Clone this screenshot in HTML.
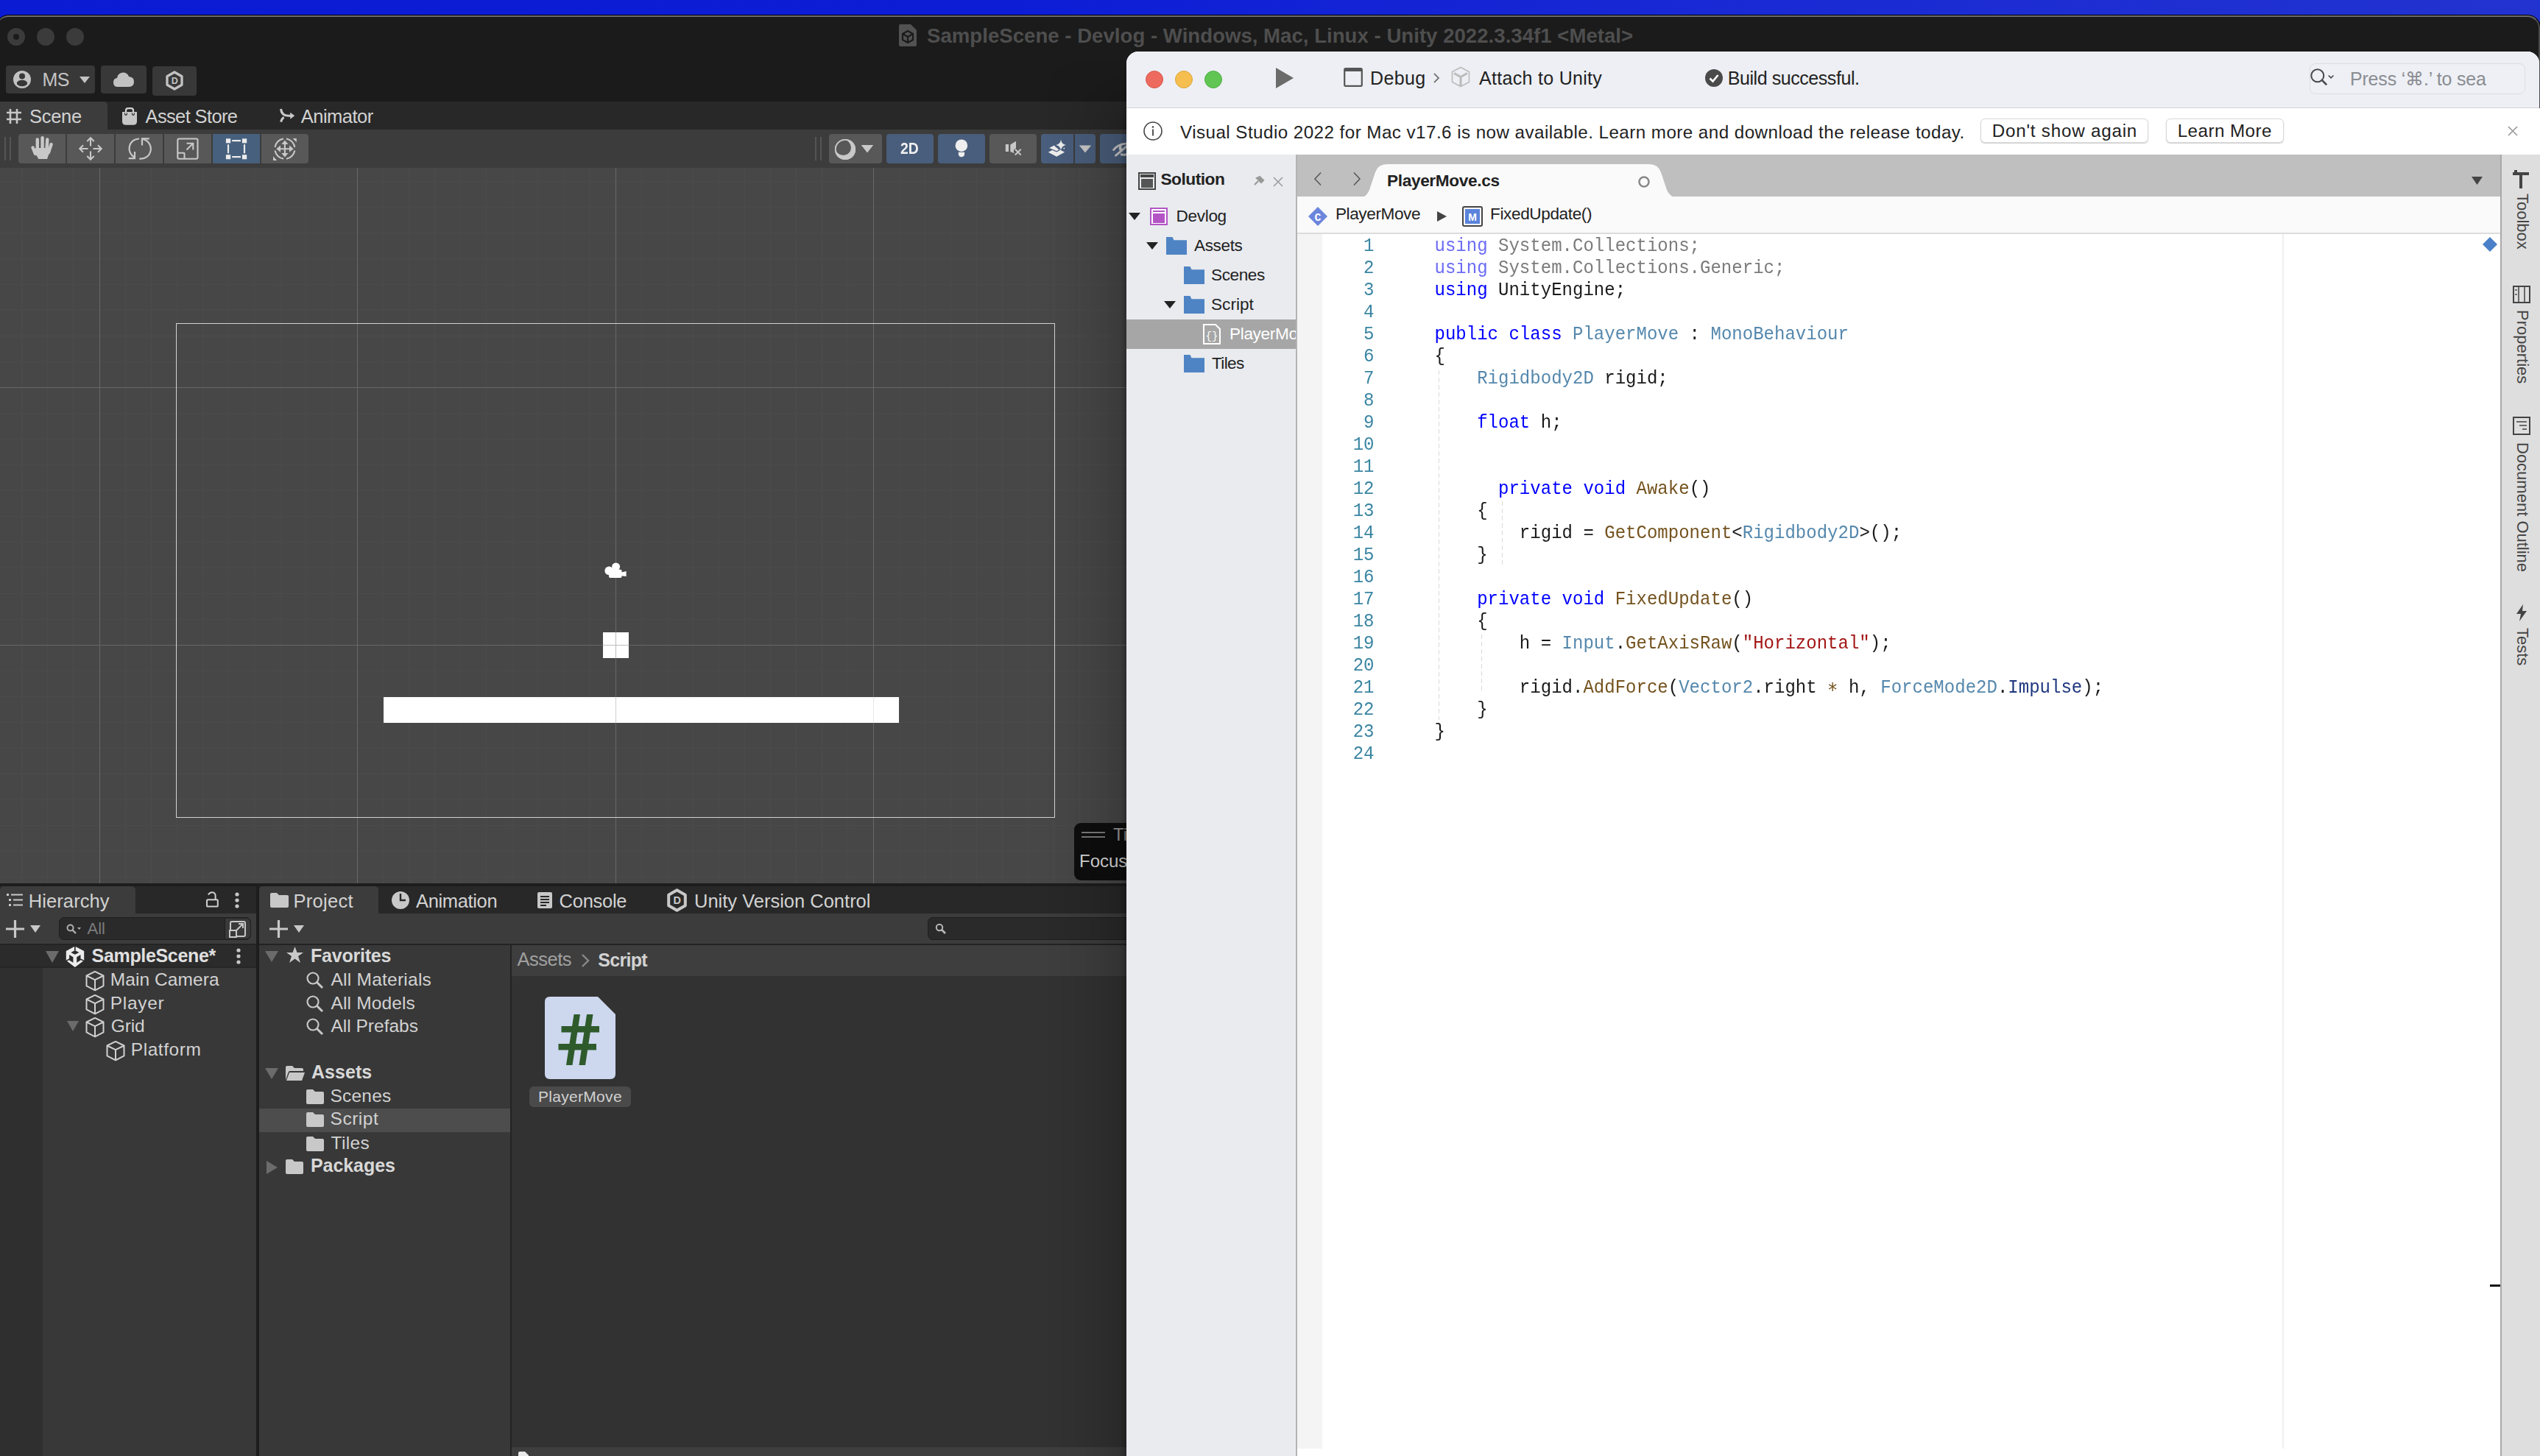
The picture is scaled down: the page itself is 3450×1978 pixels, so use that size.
<!DOCTYPE html><html><head><meta charset="utf-8"><style>html,body{margin:0;padding:0;width:3450px;height:1978px;overflow:hidden;background:#1b1b1b;}*{box-sizing:border-box;}</style></head><body><div style="position:absolute;left:0px;top:0px;width:3450px;height:30px;background:linear-gradient(90deg,#0b1bd4 0%,#0d1dd6 40%,#1a2ad4 70%,#2233d0 100%);"></div><div style="position:absolute;left:-5px;top:21px;width:3455px;height:1957px;background:#1b1b1b;border-radius:17px 17px 0 0;border-top:2px solid #6a6a6a;border-right:2px solid #4a4a4a;box-shadow:0 0 0 1px #000;"></div><div style="position:absolute;left:10px;top:38px;width:24px;height:24px;background:#3b3b3b;border-radius:50%;"></div><div style="position:absolute;left:50px;top:38px;width:24px;height:24px;background:#3b3b3b;border-radius:50%;"></div><div style="position:absolute;left:90px;top:38px;width:24px;height:24px;background:#3b3b3b;border-radius:50%;"></div><div style="position:absolute;left:18px;top:46px;width:8px;height:8px;background:#1b1b1b;border-radius:50%;"></div><svg style="position:absolute;left:1221px;top:33px;" width="24" height="30" viewBox="0 0 24 30"><path d="M2 0 H16 L24 8 V28 Q24 30 22 30 H2 Q0 30 0 28 V2 Q0 0 2 0Z" fill="#525252"/><path d="M12 9 L19 13 V21 L12 25 L5 21 V13Z" fill="none" stroke="#1b1b1b" stroke-width="2.2"/><path d="M12 17 V25 M12 17 L5 13 M12 17 L19 13" stroke="#1b1b1b" stroke-width="2.2"/></svg><div style="position:absolute;left:1259.00px;top:35.14px;font-family:'Liberation Sans', sans-serif;font-size:27.6px;line-height:27.6px;font-weight:700;color:#4e4e4e;white-space:pre;letter-spacing:0.014px;">SampleScene - Devlog - Windows, Mac, Linux - Unity 2022.3.34f1 &lt;Metal&gt;</div><div style="position:absolute;left:8px;top:89px;width:121px;height:38px;background:#383838;border-radius:4px;"></div><svg style="position:absolute;left:18px;top:96px;" width="24" height="24" viewBox="0 0 24 24"><circle cx="12" cy="12" r="12" fill="#c2c2c2"/><circle cx="12" cy="7.5" r="4" fill="#383838"/><ellipse cx="12" cy="17" rx="7.2" ry="4.3" fill="#383838"/></svg><div style="position:absolute;left:57.50px;top:95.84px;font-family:'Liberation Sans', sans-serif;font-size:25px;line-height:25px;font-weight:400;color:#c4c4c4;white-space:pre;letter-spacing:-0.625px;">MS</div><svg style="position:absolute;left:108px;top:104px;" width="14" height="9" viewBox="0 0 14 9"><path d="M0 0H14L7 9Z" fill="#c4c4c4"/></svg><div style="position:absolute;left:137px;top:89px;width:62px;height:38px;background:#383838;border-radius:4px;"></div><svg style="position:absolute;left:154px;top:97px;" width="28" height="21" viewBox="0 0 28 21"><path d="M6 21 Q0 21 0 15 Q0 9.5 5 9 Q6 2 13 1.5 Q19 1.5 21 7 Q28 7.5 28 14 Q28 21 21 21Z" fill="#c2c2c2"/></svg><div style="position:absolute;left:207px;top:90px;width:60px;height:40px;background:#383838;border-radius:4px;"></div><svg style="position:absolute;left:225px;top:96px;" width="24" height="27" viewBox="0 0 24 27"><path d="M12 2 L22 7.7 V19.3 L12 25 L2 19.3 V7.7Z" fill="none" stroke="#c2c2c2" stroke-width="3.3" stroke-linejoin="round"/><text x="12.3" y="17.8" text-anchor="middle" font-family="Liberation Sans" font-weight="700" font-size="12.5" fill="#c2c2c2">D</text></svg><div style="position:absolute;left:0px;top:138px;width:1530px;height:38px;background:#282828;"></div><div style="position:absolute;left:0px;top:138px;width:146px;height:38px;background:#3c3c3c;border-radius:0 5px 0 0;"></div><svg style="position:absolute;left:8px;top:147px;" width="22" height="22" viewBox="0 0 22 22"><path d="M6 1V21M15 1V21M1 6H21M1 15H21" stroke="#c8c8c8" stroke-width="2.6"/></svg><div style="position:absolute;left:40.00px;top:146.41px;font-family:'Liberation Sans', sans-serif;font-size:25.5px;line-height:25.5px;font-weight:400;color:#d2d2d2;white-space:pre;letter-spacing:-0.281px;">Scene</div><svg style="position:absolute;left:160px;top:140px;" width="40" height="35" viewBox="160 140 40 35"><path d="M171 152 V150 Q171 147.1 174 147.1 H178 Q181 147.1 181 150 V152" fill="none" stroke="#d2d2d2" stroke-width="2.2"/><path d="M166 152 H186 V165 Q186 169.8 181.2 169.8 H170.8 Q166 169.8 166 165Z" fill="#c6c6c6"/><path d="M169.4 153.5 Q169.4 156.4 171 156.4 Q172.5 156.4 172.5 153.5 M179.4 153.5 Q179.4 156.4 181 156.4 Q182.5 156.4 182.5 153.5" fill="none" stroke="#2a2a2a" stroke-width="1.1"/></svg><div style="position:absolute;left:197.50px;top:146.41px;font-family:'Liberation Sans', sans-serif;font-size:25.5px;line-height:25.5px;font-weight:400;color:#d2d2d2;white-space:pre;letter-spacing:-0.633px;">Asset Store</div><svg style="position:absolute;left:370px;top:140px;" width="40" height="35" viewBox="370 140 40 35"><path d="M381.5 148 Q382.5 157.3 391.5 157.3 H395" fill="none" stroke="#c8c8c8" stroke-width="3.1"/><path d="M394.2 152.8 L400.2 157.3 L394.2 161.8Z" fill="#c8c8c8"/><path d="M381.8 165.6 Q382.4 161.5 385.6 159.3" fill="none" stroke="#c8c8c8" stroke-width="3.1"/></svg><div style="position:absolute;left:408.80px;top:146.41px;font-family:'Liberation Sans', sans-serif;font-size:25.5px;line-height:25.5px;font-weight:400;color:#d2d2d2;white-space:pre;letter-spacing:-0.521px;">Animator</div><div style="position:absolute;left:0px;top:176px;width:1530px;height:52px;background:#3c3c3c;"></div><div style="position:absolute;left:6px;top:186px;width:2px;height:32px;background:#555;"></div><div style="position:absolute;left:13px;top:186px;width:2px;height:32px;background:#555;"></div><div style="position:absolute;left:25px;top:182px;width:64px;height:40px;background:#585858;border-radius:4px 0 0 4px;"></div><div style="position:absolute;left:91px;top:182px;width:64px;height:40px;background:#585858;border-radius:0;"></div><div style="position:absolute;left:157px;top:182px;width:64px;height:40px;background:#585858;border-radius:0;"></div><div style="position:absolute;left:223px;top:182px;width:64px;height:40px;background:#585858;border-radius:0;"></div><div style="position:absolute;left:289px;top:182px;width:64px;height:40px;background:#46607d;border-radius:0;"></div><div style="position:absolute;left:355px;top:182px;width:64px;height:40px;background:#585858;border-radius:0 4px 4px 0;"></div><svg style="position:absolute;left:35px;top:182px;" width="45" height="40" viewBox="35 182 45 40"><g stroke="#c8c8c8" stroke-width="4.4" stroke-linecap="round"><path d="M50.8 205 L50.8 189.5"/><path d="M57.6 204 L57.6 187.2"/><path d="M63.4 205 L64.3 189.5"/><path d="M66 207 L69.6 196"/><path d="M48 209 L44.5 200.5"/></g><path d="M45.5 204 Q48 200 52 201 L66 201 Q68.5 202 68 205 L64 216 H52.3 Z" fill="#c8c8c8"/></svg><svg style="position:absolute;left:100px;top:182px;" width="46" height="40" viewBox="100 182 46 40"><g stroke="#c8c8c8" stroke-width="2.1" fill="none"><path d="M123 187.5 V198.5 M123 205.5 V216.5 M108.5 202 H119.5 M126.5 202 H137.5"/><path d="M118.3 192 L123 187.3 L127.7 192 M118.3 212 L123 216.7 L127.7 212 M113 197.3 L108.3 202 L113 206.7 M133 197.3 L137.7 202 L133 206.7"/></g></svg><svg style="position:absolute;left:165px;top:182px;" width="46" height="40" viewBox="165 182 46 40"><g stroke="#c8c8c8" stroke-width="2.2" fill="none"><path d="M189 188.5 A13.3 13.3 0 0 0 182.5 213.5"/><path d="M189.3 215.5 A13.3 13.3 0 0 0 193.5 189"/><path d="M183 206 V215.2 H174.8"/><path d="M193 197.5 V188.3 H202.8"/></g></svg><svg style="position:absolute;left:236px;top:182px;" width="40" height="40" viewBox="236 182 40 40"><g stroke="#c8c8c8" stroke-width="2.1" fill="none"><rect x="241.3" y="188.5" width="27.2" height="27.2" rx="2"/><path d="M241.3 207.8 H249.5 Q250.5 207.8 250.5 208.8 V215.7"/><path d="M253.5 203.5 L262 195 M253.5 194.7 H262.3 V203.5"/></g></svg><svg style="position:absolute;left:300px;top:182px;" width="40" height="40" viewBox="300 182 40 40"><g fill="#ececec"><rect x="306.9" y="188.3" width="6.3" height="6.1"/><rect x="328.9" y="188.3" width="6.3" height="6.1"/><rect x="306.9" y="210.2" width="6.3" height="6.1"/><rect x="328.9" y="210.2" width="6.3" height="6.1"/></g><g stroke="#ececec" stroke-width="2.2"><path d="M315.2 191.2 H327 M315.2 213.2 H327 M310 196.3 V208.2 M332 196.3 V208.2"/></g></svg><svg style="position:absolute;left:366px;top:182px;" width="44" height="40" viewBox="366 182 44 40"><g stroke="#c8c8c8" stroke-width="2.1" fill="none"><path d="M373.5 200 A13.5 13.5 0 0 1 385 188.5 M389 188.5 A13.5 13.5 0 0 1 400.3 200 M400.3 204.5 A13.5 13.5 0 0 1 389 215.6 M385 215.6 A13.5 13.5 0 0 1 373.5 204.5"/><path d="M386.9 192 V212 M377 202.2 H397"/></g><g fill="#c8c8c8"><path d="M386.9 190.5 L391.5 196 H382.3Z M386.9 213.6 L391.5 208 H382.3Z M375.3 202.2 L381 197.6 V206.8Z M398.6 202.2 L393 197.6 V206.8Z"/><path d="M397.5 188 H402.8 V193.3Z M371 218 V212.6 L376.3 218Z"/></g></svg><div style="position:absolute;left:1107px;top:186px;width:2px;height:32px;background:#555;"></div><div style="position:absolute;left:1114px;top:186px;width:2px;height:32px;background:#555;"></div><div style="position:absolute;left:1126px;top:182px;width:72px;height:40px;background:#585858;border-radius:4px;"></div><svg style="position:absolute;left:1126px;top:182px;" width="72" height="40" viewBox="1126 182 72 40"><circle cx="1148" cy="203" r="14.1" fill="#c8c8c8"/><circle cx="1145.4" cy="200.4" r="10.6" fill="#585858"/><circle cx="1148" cy="203" r="13.2" fill="none" stroke="#c8c8c8" stroke-width="1.8"/></svg><svg style="position:absolute;left:1126px;top:182px;" width="72" height="40" viewBox="1126 182 72 40"><path d="M1169.7 197.1 H1186.2 L1178 207.6Z" fill="#c8c8c8"/></svg><div style="position:absolute;left:1204px;top:182px;width:64px;height:40px;background:#495e7c;border-radius:4px;"></div><div style="position:absolute;left:1223.00px;top:191.15px;font-family:'Liberation Sans', sans-serif;font-size:22.5px;line-height:22.5px;font-weight:700;color:#f0f0f0;white-space:pre;transform:scaleX(0.86);transform-origin:0 0;">2D</div><div style="position:absolute;left:1274px;top:182px;width:64px;height:40px;background:#495e7c;border-radius:4px;"></div><svg style="position:absolute;left:1274px;top:182px;" width="64" height="40" viewBox="1274 182 64 40"><circle cx="1305.9" cy="197.7" r="8.3" fill="#eee"/><path d="M1301.8 206.8 H1310.1 V208.8 Q1310.1 213.2 1305.95 213.2 Q1301.8 213.2 1301.8 208.8Z" fill="#eee"/></svg><div style="position:absolute;left:1344px;top:182px;width:64px;height:40px;background:#585858;border-radius:4px;"></div><svg style="position:absolute;left:1344px;top:182px;" width="64" height="40" viewBox="1344 182 64 40"><rect x="1365.8" y="196" width="4.2" height="10" fill="#c8c8c8"/><path d="M1372.3 196.6 L1380 191.8 V201.5 Q1376.6 202 1376.8 206.5 L1378 208.3 L1372.3 206Z" fill="#c8c8c8"/><path d="M1378.8 202.8 L1386.6 210.5 M1386.6 202.8 L1378.8 210.5" stroke="#c8c8c8" stroke-width="2"/></svg><div style="position:absolute;left:1414px;top:182px;width:74px;height:40px;background:#495e7c;border-radius:4px;"></div><div style="position:absolute;left:1458px;top:182px;width:2px;height:40px;background:#3c3c3c;"></div><svg style="position:absolute;left:1414px;top:182px;" width="74" height="40" viewBox="1414 182 74 40"><path d="M1423.8 206.8 L1435.1 201 L1446.1 206.8 L1435.1 212.8Z" fill="#eee"/><path d="M1423.8 201 L1432.3 196.8 Q1433.5 199.5 1435.5 200.3 Q1438.2 201.6 1438.6 204.2 L1435.1 205.8Z" fill="#eee" stroke="#495e7c" stroke-width="1.2"/><path d="M1441 189.7 Q1442 196 1448.1 196.9 Q1442 198 1441 203.8 Q1440 198 1434 196.9 Q1440 196 1441 189.7Z" fill="#eee"/><circle cx="1445.3" cy="201.5" r="0.9" fill="#eee"/></svg><svg style="position:absolute;left:1414px;top:182px;" width="74" height="40" viewBox="1414 182 74 40"><path d="M1465.8 197.4 H1482.2 L1474 207.6Z" fill="#c8c8c8"/></svg><div style="position:absolute;left:1494px;top:182px;width:60px;height:40px;background:#495e7c;border-radius:4px;"></div><svg style="position:absolute;left:1494px;top:182px;" width="40" height="40" viewBox="1494 182 40 40"><path d="M1512.6 203.6 Q1518.5 195.6 1531 194.8" fill="none" stroke="#c8c8c8" stroke-width="2.8" stroke-linecap="round"/><path d="M1515.6 211.2 L1531 198.2" stroke="#c8c8c8" stroke-width="3" stroke-linecap="round"/><path d="M1522 209.8 Q1527 210.8 1531 209.8" fill="none" stroke="#c8c8c8" stroke-width="3"/><path d="M1520.5 198.5 Q1518.6 202.5 1521.5 205.5 L1525 202.5 Q1522.5 201 1523.5 197.5Z" fill="#c8c8c8"/></svg><div style="position:absolute;left:0px;top:228px;width:1530px;height:972px;background:#474747;"></div><svg style="position:absolute;left:0px;top:228px;" width="1530" height="972" viewBox="0 0 1530 972"><rect x="29" y="0" width="1" height="972" fill="#4b4b4b"/><rect x="64" y="0" width="1" height="972" fill="#4b4b4b"/><rect x="99" y="0" width="1" height="972" fill="#4b4b4b"/><rect x="135" y="0" width="1" height="972" fill="#4b4b4b"/><rect x="170" y="0" width="1" height="972" fill="#4b4b4b"/><rect x="205" y="0" width="1" height="972" fill="#4b4b4b"/><rect x="240" y="0" width="1" height="972" fill="#4b4b4b"/><rect x="275" y="0" width="1" height="972" fill="#4b4b4b"/><rect x="310" y="0" width="1" height="972" fill="#4b4b4b"/><rect x="345" y="0" width="1" height="972" fill="#4b4b4b"/><rect x="380" y="0" width="1" height="972" fill="#4b4b4b"/><rect x="415" y="0" width="1" height="972" fill="#4b4b4b"/><rect x="450" y="0" width="1" height="972" fill="#4b4b4b"/><rect x="485" y="0" width="1" height="972" fill="#4b4b4b"/><rect x="520" y="0" width="1" height="972" fill="#4b4b4b"/><rect x="555" y="0" width="1" height="972" fill="#4b4b4b"/><rect x="590" y="0" width="1" height="972" fill="#4b4b4b"/><rect x="625" y="0" width="1" height="972" fill="#4b4b4b"/><rect x="660" y="0" width="1" height="972" fill="#4b4b4b"/><rect x="695" y="0" width="1" height="972" fill="#4b4b4b"/><rect x="730" y="0" width="1" height="972" fill="#4b4b4b"/><rect x="765" y="0" width="1" height="972" fill="#4b4b4b"/><rect x="800" y="0" width="1" height="972" fill="#4b4b4b"/><rect x="836" y="0" width="1" height="972" fill="#4b4b4b"/><rect x="871" y="0" width="1" height="972" fill="#4b4b4b"/><rect x="906" y="0" width="1" height="972" fill="#4b4b4b"/><rect x="941" y="0" width="1" height="972" fill="#4b4b4b"/><rect x="976" y="0" width="1" height="972" fill="#4b4b4b"/><rect x="1011" y="0" width="1" height="972" fill="#4b4b4b"/><rect x="1046" y="0" width="1" height="972" fill="#4b4b4b"/><rect x="1081" y="0" width="1" height="972" fill="#4b4b4b"/><rect x="1116" y="0" width="1" height="972" fill="#4b4b4b"/><rect x="1151" y="0" width="1" height="972" fill="#4b4b4b"/><rect x="1186" y="0" width="1" height="972" fill="#4b4b4b"/><rect x="1221" y="0" width="1" height="972" fill="#4b4b4b"/><rect x="1256" y="0" width="1" height="972" fill="#4b4b4b"/><rect x="1291" y="0" width="1" height="972" fill="#4b4b4b"/><rect x="1326" y="0" width="1" height="972" fill="#4b4b4b"/><rect x="1361" y="0" width="1" height="972" fill="#4b4b4b"/><rect x="1396" y="0" width="1" height="972" fill="#4b4b4b"/><rect x="1431" y="0" width="1" height="972" fill="#4b4b4b"/><rect x="1466" y="0" width="1" height="972" fill="#4b4b4b"/><rect x="1501" y="0" width="1" height="972" fill="#4b4b4b"/><rect x="0" y="18" width="1530" height="1" fill="#4b4b4b"/><rect x="0" y="53" width="1530" height="1" fill="#4b4b4b"/><rect x="0" y="88" width="1530" height="1" fill="#4b4b4b"/><rect x="0" y="123" width="1530" height="1" fill="#4b4b4b"/><rect x="0" y="158" width="1530" height="1" fill="#4b4b4b"/><rect x="0" y="193" width="1530" height="1" fill="#4b4b4b"/><rect x="0" y="228" width="1530" height="1" fill="#4b4b4b"/><rect x="0" y="263" width="1530" height="1" fill="#4b4b4b"/><rect x="0" y="298" width="1530" height="1" fill="#4b4b4b"/><rect x="0" y="333" width="1530" height="1" fill="#4b4b4b"/><rect x="0" y="368" width="1530" height="1" fill="#4b4b4b"/><rect x="0" y="403" width="1530" height="1" fill="#4b4b4b"/><rect x="0" y="438" width="1530" height="1" fill="#4b4b4b"/><rect x="0" y="473" width="1530" height="1" fill="#4b4b4b"/><rect x="0" y="508" width="1530" height="1" fill="#4b4b4b"/><rect x="0" y="543" width="1530" height="1" fill="#4b4b4b"/><rect x="0" y="578" width="1530" height="1" fill="#4b4b4b"/><rect x="0" y="613" width="1530" height="1" fill="#4b4b4b"/><rect x="0" y="648" width="1530" height="1" fill="#4b4b4b"/><rect x="0" y="683" width="1530" height="1" fill="#4b4b4b"/><rect x="0" y="718" width="1530" height="1" fill="#4b4b4b"/><rect x="0" y="753" width="1530" height="1" fill="#4b4b4b"/><rect x="0" y="788" width="1530" height="1" fill="#4b4b4b"/><rect x="0" y="823" width="1530" height="1" fill="#4b4b4b"/><rect x="0" y="858" width="1530" height="1" fill="#4b4b4b"/><rect x="0" y="893" width="1530" height="1" fill="#4b4b4b"/><rect x="0" y="928" width="1530" height="1" fill="#4b4b4b"/><rect x="0" y="963" width="1530" height="1" fill="#4b4b4b"/><rect x="135" y="0" width="1" height="972" fill="#686868"/><rect x="485" y="0" width="1" height="972" fill="#686868"/><rect x="836" y="0" width="1" height="972" fill="#686868"/><rect x="1186" y="0" width="1" height="972" fill="#686868"/><rect x="0" y="298" width="1530" height="1" fill="#686868"/><rect x="0" y="648" width="1530" height="1" fill="#686868"/></svg><div style="position:absolute;left:239px;top:439px;width:1194px;height:672px;border:1.5px solid #d2d2d2;"></div><div style="position:absolute;left:521px;top:947px;width:700px;height:35px;background:#ffffff;"></div><div style="position:absolute;left:819px;top:859px;width:35px;height:35px;background:#ffffff;"></div><div style="position:absolute;left:836px;top:859px;width:1px;height:35px;background:#bdbdbd;"></div><div style="position:absolute;left:819px;top:876px;width:35px;height:1px;background:#bdbdbd;"></div><div style="position:absolute;left:836px;top:947px;width:1px;height:35px;background:#cfcfcf;"></div><div style="position:absolute;left:1186px;top:947px;width:1px;height:35px;background:#e6e6e6;"></div><svg style="position:absolute;left:815px;top:755px;" width="45" height="35" viewBox="0 0 45 35"><circle cx="12.3" cy="20.4" r="5.9" fill="#fff"/><circle cx="21.6" cy="14.9" r="5.5" fill="#fff"/><rect x="12" y="18.75" width="17.6" height="11.25" rx="2" fill="#fff"/><path d="M29 22.5 L35.6 20.9 L35.6 27.9 L29 27.3 Z" fill="#fff"/></svg><div style="position:absolute;left:1459px;top:1118px;width:100px;height:78px;background:#0e0e0e;border-radius:9px;"></div><div style="position:absolute;left:1469px;top:1130px;width:32px;height:2px;background:#7a7a7a;"></div><div style="position:absolute;left:1469px;top:1136px;width:32px;height:2px;background:#7a7a7a;"></div><div style="position:absolute;left:1512.00px;top:1121.68px;font-family:'Liberation Sans', sans-serif;font-size:24px;line-height:24px;font-weight:400;color:#9a9a9a;white-space:pre;">Tilemap</div><div style="position:absolute;left:1466.00px;top:1158.18px;font-family:'Liberation Sans', sans-serif;font-size:24px;line-height:24px;font-weight:400;color:#d8d8d8;white-space:pre;">Focus</div><div style="position:absolute;left:0px;top:1200px;width:1530px;height:778px;background:#1d1d1d;"></div><div style="position:absolute;left:0px;top:1204px;width:348px;height:37px;background:#282828;"></div><div style="position:absolute;left:352px;top:1204px;width:1178px;height:37px;background:#282828;"></div><div style="position:absolute;left:0px;top:1204px;width:184px;height:37px;background:#3c3c3c;border-radius:5px 5px 0 0;"></div><div style="position:absolute;left:352px;top:1204px;width:162px;height:37px;background:#3c3c3c;border-radius:5px 5px 0 0;"></div><svg style="position:absolute;left:9px;top:1214px;" width="22" height="17" viewBox="0 0 22 17"><rect x="0" y="0" width="3" height="3" fill="#c8c8c8"/><rect x="3" y="7" width="3" height="3" fill="#c8c8c8"/><rect x="3" y="14" width="3" height="3" fill="#c8c8c8"/><path d="M6 1.5H22M9 8.5H22M9 15.5H22" stroke="#c8c8c8" stroke-width="2.2"/></svg><div style="position:absolute;left:38.80px;top:1212.11px;font-family:'Liberation Sans', sans-serif;font-size:25.5px;line-height:25.5px;font-weight:400;color:#d2d2d2;white-space:pre;letter-spacing:0.080px;">Hierarchy</div><svg style="position:absolute;left:270px;top:1205px;" width="40" height="35" viewBox="270 1205 40 35"><path d="M282.8 1215.6 Q285 1212 288.3 1212.2 Q292.6 1212.5 292.6 1217 V1222.5" fill="none" stroke="#d0d0d0" stroke-width="2"/><rect x="281" y="1222.3" width="14.8" height="9.3" rx="1.2" fill="none" stroke="#d0d0d0" stroke-width="2"/></svg><svg style="position:absolute;left:318px;top:1212px;" width="8" height="22" viewBox="0 0 8 22"><circle cx="4" cy="3" r="2.6" fill="#c8c8c8"/><circle cx="4" cy="11" r="2.6" fill="#c8c8c8"/><circle cx="4" cy="19" r="2.6" fill="#c8c8c8"/></svg><svg style="position:absolute;left:367px;top:1213px;" width="25" height="20" viewBox="0 0 25 20"><path d="M0 2Q0 0 2 0H9L12 3H23Q25 3 25 5V18Q25 20 23 20H2Q0 20 0 18Z" fill="#c8c8c8"/></svg><div style="position:absolute;left:398.40px;top:1212.11px;font-family:'Liberation Sans', sans-serif;font-size:25.5px;line-height:25.5px;font-weight:400;color:#d2d2d2;white-space:pre;letter-spacing:0.303px;">Project</div><svg style="position:absolute;left:532px;top:1211px;" width="24" height="24" viewBox="0 0 24 24"><circle cx="12" cy="12" r="12" fill="#c8c8c8"/><path d="M12 3V12H19" fill="none" stroke="#282828" stroke-width="2.4"/></svg><div style="position:absolute;left:565.00px;top:1212.11px;font-family:'Liberation Sans', sans-serif;font-size:25.5px;line-height:25.5px;font-weight:400;color:#d2d2d2;white-space:pre;letter-spacing:-0.351px;">Animation</div><svg style="position:absolute;left:730px;top:1212px;" width="20" height="22" viewBox="0 0 20 22"><rect x="0" y="0" width="20" height="22" rx="2" fill="#c8c8c8"/><path d="M4 6H16M4 10H16M4 14H16M4 18H12" stroke="#282828" stroke-width="1.8"/></svg><div style="position:absolute;left:759.60px;top:1212.41px;font-family:'Liberation Sans', sans-serif;font-size:25.5px;line-height:25.5px;font-weight:400;color:#d2d2d2;white-space:pre;letter-spacing:-0.279px;">Console</div><svg style="position:absolute;left:905px;top:1207px;" width="29" height="32" viewBox="0 0 29 32"><path d="M14.5 2.3 L25.8 8.7 V23.3 L14.5 29.7 L3.2 23.3 V8.7Z" fill="none" stroke="#c8c8c8" stroke-width="4" stroke-linejoin="round"/><text x="14.8" y="21.3" text-anchor="middle" font-family="Liberation Sans" font-weight="700" font-size="14.5" fill="#c8c8c8">D</text></svg><div style="position:absolute;left:943.00px;top:1212.41px;font-family:'Liberation Sans', sans-serif;font-size:25.5px;line-height:25.5px;font-weight:400;color:#d2d2d2;white-space:pre;letter-spacing:-0.003px;">Unity Version Control</div><div style="position:absolute;left:0px;top:1241px;width:348px;height:41px;background:#3c3c3c;"></div><div style="position:absolute;left:0px;top:1282px;width:348px;height:2px;background:#232323;"></div><svg style="position:absolute;left:8px;top:1250px;" width="25" height="24" viewBox="0 0 25 24"><path d="M12.5 0V24M0 12H25" stroke="#c8c8c8" stroke-width="3.2"/></svg><svg style="position:absolute;left:41px;top:1257px;" width="14" height="10" viewBox="0 0 14 10"><path d="M0 0H14L7 10Z" fill="#c8c8c8"/></svg><div style="position:absolute;left:80px;top:1246px;width:261px;height:31px;background:#2a2a2a;border:1.5px solid #1f1f1f;border-radius:7px;"></div><div style="position:absolute;left:305px;top:1248px;width:35px;height:27px;background:#3a3a3a;border-radius:0 6px 6px 0;border-left:1.5px solid #1f1f1f;"></div><svg style="position:absolute;left:90px;top:1255px;" width="20" height="14" viewBox="0 0 20 14"><circle cx="5.5" cy="5.5" r="4" fill="none" stroke="#b0b0b0" stroke-width="2"/><path d="M8.5 8.5 L13 13" stroke="#b0b0b0" stroke-width="2.4"/><path d="M15 5H20L17.5 8Z" fill="#b0b0b0"/></svg><div style="position:absolute;left:118.50px;top:1251.38px;font-family:'Liberation Sans', sans-serif;font-size:22px;line-height:22px;font-weight:400;color:#7c7c7c;white-space:pre;">All</div><svg style="position:absolute;left:311px;top:1250px;" width="25" height="24" viewBox="0 0 25 24"><rect x="2" y="2" width="20" height="20" rx="2" fill="none" stroke="#c8c8c8" stroke-width="2"/><rect x="1" y="14" width="9" height="9" fill="#3a3a3a" stroke="#c8c8c8" stroke-width="2"/><path d="M10 14L19 5M13 5H19V11" fill="none" stroke="#c8c8c8" stroke-width="2"/></svg><div style="position:absolute;left:0px;top:1284px;width:348px;height:694px;background:#383838;"></div><div style="position:absolute;left:0px;top:1314px;width:58px;height:664px;background:#2f2f2f;"></div><div style="position:absolute;left:0px;top:1284px;width:348px;height:30px;background:#2b2b2b;"></div><div style="position:absolute;left:0px;top:1313px;width:348px;height:2px;background:#262626;"></div><svg style="position:absolute;left:62px;top:1292px;" width="18" height="16" viewBox="0 0 18 16"><path d="M0 0H18L9 16Z" fill="#6b6b6b"/></svg><svg style="position:absolute;left:85px;top:1282px;" width="35" height="35" viewBox="85 1282 35 35"><path d="M101.8 1285.6 L114.2 1292.1 V1304.8 L101.8 1314 L89.8 1304.8 V1292.1Z" fill="#ececec"/><g fill="#2b2b2b"><path d="M96.3 1293.9 L101.8 1291.1 L107.4 1293.9 L101.8 1296.7Z"/><rect x="101" y="1284" width="1.7" height="7.3"/><path d="M94.1 1297.1 L99.4 1300.3 V1307.7 L94.1 1304.6Z M109.5 1297.1 L104.2 1300.3 V1307.7 L109.5 1304.6Z"/></g><path d="M89.5 1305.6 L94.3 1303 M114.5 1305.6 L109.3 1303" stroke="#2b2b2b" stroke-width="1.6"/></svg><div style="position:absolute;left:124.60px;top:1285.84px;font-family:'Liberation Sans', sans-serif;font-size:25px;line-height:25px;font-weight:700;color:#e0e0e0;white-space:pre;letter-spacing:-0.335px;">SampleScene*</div><svg style="position:absolute;left:320px;top:1288px;" width="8" height="22" viewBox="0 0 8 22"><circle cx="4" cy="3" r="2.6" fill="#c8c8c8"/><circle cx="4" cy="11" r="2.6" fill="#c8c8c8"/><circle cx="4" cy="19" r="2.6" fill="#c8c8c8"/></svg><svg style="position:absolute;left:116px;top:1318.8px;" width="26" height="28" viewBox="0 0 26 28"><path d="M13 0.9 L24.5 6.5 V20.3 L13 26.3 L1.5 20.3 V6.5Z M1.5 6.5 L13 12.1 L24.5 6.5 M13 12.1 V26.3" fill="none" stroke="#d0d0d0" stroke-width="2" stroke-linejoin="round"/></svg><div style="position:absolute;left:149.80px;top:1318.96px;font-family:'Liberation Sans', sans-serif;font-size:24.5px;line-height:24.5px;font-weight:400;color:#d2d2d2;white-space:pre;letter-spacing:0.078px;">Main Camera</div><svg style="position:absolute;left:116px;top:1350.5px;" width="26" height="28" viewBox="0 0 26 28"><path d="M13 0.9 L24.5 6.5 V20.3 L13 26.3 L1.5 20.3 V6.5Z M1.5 6.5 L13 12.1 L24.5 6.5 M13 12.1 V26.3" fill="none" stroke="#d0d0d0" stroke-width="2" stroke-linejoin="round"/></svg><div style="position:absolute;left:149.80px;top:1350.66px;font-family:'Liberation Sans', sans-serif;font-size:24.5px;line-height:24.5px;font-weight:400;color:#d2d2d2;white-space:pre;letter-spacing:0.703px;">Player</div><svg style="position:absolute;left:116px;top:1382px;" width="26" height="28" viewBox="0 0 26 28"><path d="M13 0.9 L24.5 6.5 V20.3 L13 26.3 L1.5 20.3 V6.5Z M1.5 6.5 L13 12.1 L24.5 6.5 M13 12.1 V26.3" fill="none" stroke="#d0d0d0" stroke-width="2" stroke-linejoin="round"/></svg><div style="position:absolute;left:150.80px;top:1382.16px;font-family:'Liberation Sans', sans-serif;font-size:24.5px;line-height:24.5px;font-weight:400;color:#d2d2d2;white-space:pre;letter-spacing:-0.153px;">Grid</div><svg style="position:absolute;left:91px;top:1387px;" width="16" height="14" viewBox="0 0 16 14"><path d="M0 0H16L8 14Z" fill="#6b6b6b"/></svg><svg style="position:absolute;left:144px;top:1413.9px;" width="26" height="28" viewBox="0 0 26 28"><path d="M13 0.9 L24.5 6.5 V20.3 L13 26.3 L1.5 20.3 V6.5Z M1.5 6.5 L13 12.1 L24.5 6.5 M13 12.1 V26.3" fill="none" stroke="#d0d0d0" stroke-width="2" stroke-linejoin="round"/></svg><div style="position:absolute;left:177.80px;top:1414.06px;font-family:'Liberation Sans', sans-serif;font-size:24.5px;line-height:24.5px;font-weight:400;color:#d2d2d2;white-space:pre;letter-spacing:0.542px;">Platform</div><div style="position:absolute;left:352px;top:1241px;width:1178px;height:41px;background:#3c3c3c;"></div><div style="position:absolute;left:352px;top:1282px;width:1178px;height:2px;background:#232323;"></div><svg style="position:absolute;left:366px;top:1250px;" width="25" height="24" viewBox="0 0 25 24"><path d="M12.5 0V24M0 12H25" stroke="#c8c8c8" stroke-width="3.2"/></svg><svg style="position:absolute;left:399px;top:1257px;" width="14" height="10" viewBox="0 0 14 10"><path d="M0 0H14L7 10Z" fill="#c8c8c8"/></svg><div style="position:absolute;left:1260px;top:1246px;width:300px;height:31px;background:#2a2a2a;border:1.5px solid #1f1f1f;border-radius:7px;"></div><svg style="position:absolute;left:1270px;top:1254px;" width="16" height="16" viewBox="0 0 16 16"><circle cx="6" cy="6" r="4.2" fill="none" stroke="#b8b8b8" stroke-width="2"/><path d="M9 9 L14 14" stroke="#b8b8b8" stroke-width="2.6"/></svg><div style="position:absolute;left:352px;top:1284px;width:341px;height:694px;background:#383838;"></div><div style="position:absolute;left:693px;top:1284px;width:2px;height:694px;background:#232323;"></div><svg style="position:absolute;left:360px;top:1292px;" width="18" height="15" viewBox="0 0 18 15"><path d="M0 0H18L9 15Z" fill="#6b6b6b"/></svg><svg style="position:absolute;left:388px;top:1285px;" width="25" height="24" viewBox="0 0 25 24"><path d="M12.5 1 L15.5 9 L24 9 L17 14 L20 23 L12.5 17.5 L5 23 L8 14 L1 9 L9.5 9Z" fill="#c8c8c8"/></svg><div style="position:absolute;left:422.00px;top:1285.84px;font-family:'Liberation Sans', sans-serif;font-size:25px;line-height:25px;font-weight:700;color:#d8d8d8;white-space:pre;letter-spacing:-0.219px;">Favorites</div><svg style="position:absolute;left:416px;top:1319.8px;" width="24" height="24" viewBox="0 0 24 24"><circle cx="9" cy="9" r="7.5" fill="none" stroke="#c8c8c8" stroke-width="2.2"/><path d="M14.5 14.5 L22 22" stroke="#c8c8c8" stroke-width="3"/></svg><div style="position:absolute;left:449.50px;top:1318.96px;font-family:'Liberation Sans', sans-serif;font-size:24.5px;line-height:24.5px;font-weight:400;color:#d2d2d2;white-space:pre;letter-spacing:0.244px;">All Materials</div><svg style="position:absolute;left:416px;top:1351.5px;" width="24" height="24" viewBox="0 0 24 24"><circle cx="9" cy="9" r="7.5" fill="none" stroke="#c8c8c8" stroke-width="2.2"/><path d="M14.5 14.5 L22 22" stroke="#c8c8c8" stroke-width="3"/></svg><div style="position:absolute;left:449.50px;top:1350.66px;font-family:'Liberation Sans', sans-serif;font-size:24.5px;line-height:24.5px;font-weight:400;color:#d2d2d2;white-space:pre;letter-spacing:0.149px;">All Models</div><svg style="position:absolute;left:416px;top:1383px;" width="24" height="24" viewBox="0 0 24 24"><circle cx="9" cy="9" r="7.5" fill="none" stroke="#c8c8c8" stroke-width="2.2"/><path d="M14.5 14.5 L22 22" stroke="#c8c8c8" stroke-width="3"/></svg><div style="position:absolute;left:449.50px;top:1382.16px;font-family:'Liberation Sans', sans-serif;font-size:24.5px;line-height:24.5px;font-weight:400;color:#d2d2d2;white-space:pre;letter-spacing:-0.002px;">All Prefabs</div><svg style="position:absolute;left:360px;top:1451px;" width="18" height="15" viewBox="0 0 18 15"><path d="M0 0H18L9 15Z" fill="#6b6b6b"/></svg><svg style="position:absolute;left:388px;top:1448px;" width="27" height="20" viewBox="0 0 27 20"><path d="M0 2Q0 0 2 0H9L12 3H22Q24 3 24 5V7H6Q4 7 3.5 9L0 19Z" fill="#c8c8c8"/><path d="M5 9H26L22 20H1Z" fill="#c8c8c8"/></svg><div style="position:absolute;left:423.00px;top:1443.84px;font-family:'Liberation Sans', sans-serif;font-size:25px;line-height:25px;font-weight:700;color:#d8d8d8;white-space:pre;letter-spacing:0.042px;">Assets</div><div style="position:absolute;left:352px;top:1506px;width:341px;height:32px;background:#4d4d4d;"></div><svg style="position:absolute;left:416px;top:1479.6px;" width="24" height="20" viewBox="0 0 24 20"><path d="M0 2Q0 0 2 0H9L12 3H22Q24 3 24 5V18Q24 20 22 20H2Q0 20 0 18Z" fill="#c8c8c8"/></svg><div style="position:absolute;left:448.50px;top:1476.76px;font-family:'Liberation Sans', sans-serif;font-size:24.5px;line-height:24.5px;font-weight:400;color:#d2d2d2;white-space:pre;letter-spacing:0.206px;">Scenes</div><svg style="position:absolute;left:416px;top:1511.3px;" width="24" height="20" viewBox="0 0 24 20"><path d="M0 2Q0 0 2 0H9L12 3H22Q24 3 24 5V18Q24 20 22 20H2Q0 20 0 18Z" fill="#c8c8c8"/></svg><div style="position:absolute;left:448.50px;top:1508.46px;font-family:'Liberation Sans', sans-serif;font-size:24.5px;line-height:24.5px;font-weight:400;color:#d2d2d2;white-space:pre;letter-spacing:0.536px;">Script</div><svg style="position:absolute;left:416px;top:1543.5px;" width="24" height="20" viewBox="0 0 24 20"><path d="M0 2Q0 0 2 0H9L12 3H22Q24 3 24 5V18Q24 20 22 20H2Q0 20 0 18Z" fill="#c8c8c8"/></svg><div style="position:absolute;left:449.50px;top:1540.66px;font-family:'Liberation Sans', sans-serif;font-size:24.5px;line-height:24.5px;font-weight:400;color:#d2d2d2;white-space:pre;letter-spacing:0.383px;">Tiles</div><svg style="position:absolute;left:362px;top:1577px;" width="15" height="18" viewBox="0 0 15 18"><path d="M0 0V18L15 9Z" fill="#6b6b6b"/></svg><svg style="position:absolute;left:388px;top:1575px;" width="24" height="20" viewBox="0 0 24 20"><path d="M0 2Q0 0 2 0H9L12 3H22Q24 3 24 5V18Q24 20 22 20H2Q0 20 0 18Z" fill="#c8c8c8"/></svg><div style="position:absolute;left:422.00px;top:1570.84px;font-family:'Liberation Sans', sans-serif;font-size:25px;line-height:25px;font-weight:700;color:#d8d8d8;white-space:pre;letter-spacing:-0.066px;">Packages</div><div style="position:absolute;left:695px;top:1284px;width:835px;height:694px;background:#323232;"></div><div style="position:absolute;left:695px;top:1284px;width:835px;height:42px;background:#3e3e3e;"></div><div style="position:absolute;left:702.40px;top:1291.41px;font-family:'Liberation Sans', sans-serif;font-size:25.5px;line-height:25.5px;font-weight:400;color:#a0a0a0;white-space:pre;letter-spacing:-0.475px;">Assets</div><svg style="position:absolute;left:789px;top:1295px;" width="12" height="20" viewBox="0 0 12 20"><path d="M2 2 L10 10 L2 18" fill="none" stroke="#8a8a8a" stroke-width="2.4"/></svg><div style="position:absolute;left:812.30px;top:1291.84px;font-family:'Liberation Sans', sans-serif;font-size:25px;line-height:25px;font-weight:700;color:#d2d2d2;white-space:pre;letter-spacing:-0.705px;">Script</div><svg style="position:absolute;left:740px;top:1354px;" width="96" height="112" viewBox="0 0 96 112"><path d="M7 0 H72 L96 24 V105 Q96 112 89 112 H7 Q0 112 0 105 V7 Q0 0 7 0Z" fill="#cdd7ee"/><path d="M22.5 40 H74 V48.5 H22.5Z M18.5 64 H70 V72.5 H18.5Z" fill="#2f5b2c"/><path d="M39.5 24 H48 L37.5 93 H29Z M57 24 H65.5 L55 93 H46.5Z" fill="#2f5b2c"/></svg><div style="position:absolute;left:719px;top:1476px;width:138px;height:28px;background:#4a4a4a;border-radius:6px;"></div><div style="position:absolute;left:731.00px;top:1479.42px;font-family:'Liberation Sans', sans-serif;font-size:21px;line-height:21px;font-weight:400;color:#d2d2d2;white-space:pre;letter-spacing:0.300px;">PlayerMove</div><div style="position:absolute;left:695px;top:1966px;width:835px;height:12px;background:#3e3e3e;"></div><svg style="position:absolute;left:704px;top:1972px;" width="14" height="6" viewBox="0 0 14 6"><path d="M0 2Q0 0 2 0H9L14 5V6H0Z" fill="#e8e8e8"/></svg><div style="position:absolute;left:1420px;top:80px;width:110px;height:1898px;-webkit-mask-image:linear-gradient(180deg,transparent 0,#000 90px);mask-image:linear-gradient(180deg,transparent 0,#000 90px);background:linear-gradient(90deg,rgba(0,0,0,0) 0%,rgba(0,0,0,0.03) 30%,rgba(0,0,0,0.09) 65%,rgba(0,0,0,0.17) 92%,rgba(0,0,0,0.35) 100%);"></div><div style="position:absolute;left:1530px;top:70px;width:1919px;height:1908px;background:#ffffff;border-radius:16px 16px 0 0;overflow:hidden;"></div><div style="position:absolute;left:1530px;top:70px;width:1919px;height:77px;background:#edeff4;border-radius:16px 16px 0 0;border-bottom:1.5px solid #d2d3d6;"></div><div style="position:absolute;left:1556px;top:96px;width:24px;height:24px;background:#ee6a5f;border-radius:50%;border:0.8px solid #d9554a;"></div><div style="position:absolute;left:1596px;top:96px;width:24px;height:24px;background:#f5be4f;border-radius:50%;border:0.8px solid #dea53a;"></div><div style="position:absolute;left:1636px;top:96px;width:24px;height:24px;background:#61c554;border-radius:50%;border:0.8px solid #4fae44;"></div><svg style="position:absolute;left:1733px;top:92px;" width="24" height="28" viewBox="0 0 24 28"><path d="M0 0 L24 14 L0 28Z" fill="#6b6b6b"/></svg><svg style="position:absolute;left:1825px;top:92px;" width="26" height="26" viewBox="0 0 26 26"><rect x="1.2" y="1.2" width="23.6" height="23.6" rx="1.5" fill="none" stroke="#555" stroke-width="2.2"/><rect x="1" y="1" width="24" height="4" fill="#555"/></svg><div style="position:absolute;left:1861.00px;top:94.04px;font-family:'Liberation Sans', sans-serif;font-size:25px;line-height:25px;font-weight:400;color:#222;white-space:pre;letter-spacing:0.384px;">Debug</div><svg style="position:absolute;left:1946px;top:98px;" width="10" height="16" viewBox="0 0 10 16"><path d="M2 2 L8 8 L2 14" fill="none" stroke="#777" stroke-width="1.8"/></svg><svg style="position:absolute;left:1971px;top:90px;" width="26" height="29" viewBox="0 0 26 29"><path d="M13 1.5 L24.5 7.5 V21.5 L13 27.5 L1.5 21.5 V7.5Z" fill="none" stroke="#bbb" stroke-width="1.6"/><path d="M13 14.5 V27 M13 14.5 L4 9.5 M13 14.5 L22 9.5" stroke="#bbb" stroke-width="3"/></svg><div style="position:absolute;left:2009.00px;top:94.04px;font-family:'Liberation Sans', sans-serif;font-size:25px;line-height:25px;font-weight:400;color:#222;white-space:pre;letter-spacing:0.302px;">Attach to Unity</div><svg style="position:absolute;left:2316px;top:94px;" width="24" height="24" viewBox="0 0 24 24"><circle cx="12" cy="12" r="12" fill="#4a4a4a"/><path d="M6.5 12.5 L10.5 16.5 L17.5 8" fill="none" stroke="#fff" stroke-width="2.6"/></svg><div style="position:absolute;left:2346.80px;top:94.04px;font-family:'Liberation Sans', sans-serif;font-size:25px;line-height:25px;font-weight:400;color:#222;white-space:pre;letter-spacing:-0.441px;">Build successful.</div><div style="position:absolute;left:3137px;top:86px;width:293px;height:42px;background:#eef0f5;border:1.5px solid #dcdee3;border-radius:8px;"></div><svg style="position:absolute;left:3137px;top:86px;" width="50" height="42" viewBox="3137 86 50 42"><circle cx="3147.8" cy="102.8" r="8.5" fill="none" stroke="#4a4b4e" stroke-width="2.1"/><path d="M3153.8 108.8 L3159.5 114.5" stroke="#4a4b4e" stroke-width="2.6" stroke-linecap="round"/><path d="M3162.8 102.5 L3166 105.8 L3169.5 102.5" fill="none" stroke="#4a4b4e" stroke-width="1.7"/></svg><div style="position:absolute;left:3192.00px;top:95.04px;font-family:'Liberation Sans', sans-serif;font-size:25px;line-height:25px;font-weight:400;color:#8a8d92;white-space:pre;letter-spacing:-0.191px;">Press ‘⌘.’ to sea</div><div style="position:absolute;left:1530px;top:147px;width:1920px;height:63px;background:#ffffff;"></div><svg style="position:absolute;left:1553px;top:165px;" width="26" height="26" viewBox="0 0 26 26"><circle cx="13" cy="13" r="12" fill="none" stroke="#444" stroke-width="1.6"/><circle cx="13" cy="7.5" r="1.3" fill="#444"/><rect x="12.1" y="10.5" width="1.8" height="9" fill="#444"/></svg><div style="position:absolute;left:1603.00px;top:167.51px;font-family:'Liberation Sans', sans-serif;font-size:24.2px;line-height:24.2px;font-weight:400;color:#222;white-space:pre;letter-spacing:0.452px;">Visual Studio 2022 for Mac v17.6 is now available. Learn more and download the release today.</div><div style="position:absolute;left:2690px;top:161px;width:228px;height:33px;background:#fff;border:1px solid #d8d8d8;border-radius:6px;box-shadow:0 1px 1.5px rgba(0,0,0,0.2);"></div><div style="position:absolute;left:2705.70px;top:165.51px;font-family:'Liberation Sans', sans-serif;font-size:24.2px;line-height:24.2px;font-weight:400;color:#222;white-space:pre;letter-spacing:0.784px;">Don&#x27;t show again</div><div style="position:absolute;left:2942px;top:161px;width:160px;height:33px;background:#fff;border:1px solid #d8d8d8;border-radius:6px;box-shadow:0 1px 1.5px rgba(0,0,0,0.2);"></div><div style="position:absolute;left:2957.70px;top:165.51px;font-family:'Liberation Sans', sans-serif;font-size:24.2px;line-height:24.2px;font-weight:400;color:#222;white-space:pre;letter-spacing:0.451px;">Learn More</div><svg style="position:absolute;left:3406px;top:171px;" width="14" height="14" viewBox="0 0 14 14"><path d="M1 1 L13 13 M13 1 L1 13" stroke="#999" stroke-width="1.6"/></svg><div style="position:absolute;left:1530px;top:210px;width:230px;height:1768px;background:#e9ebef;"></div><div style="position:absolute;left:1760px;top:210px;width:2px;height:1768px;background:#b4b4b4;"></div><svg style="position:absolute;left:1546px;top:234px;" width="24" height="24" viewBox="0 0 24 24"><rect x="1" y="1" width="22" height="22" fill="none" stroke="#444" stroke-width="2"/><rect x="3" y="3" width="18" height="4" fill="#444"/><rect x="4" y="9" width="16" height="12" fill="#555"/></svg><div style="position:absolute;left:1576.40px;top:232.20px;font-family:'Liberation Sans', sans-serif;font-size:22.8px;line-height:22.8px;font-weight:700;color:#222;white-space:pre;letter-spacing:-0.520px;">Solution</div><svg style="position:absolute;left:1702px;top:236px;" width="18" height="18" viewBox="0 0 18 18"><path d="M9 4 L14 9 L11 12 L5 6Z M7 10 L2 15" stroke="#999" stroke-width="2.2" fill="#999"/></svg><svg style="position:absolute;left:1729px;top:240px;" width="14" height="14" viewBox="0 0 14 14"><path d="M1 1 L13 13 M13 1 L1 13" stroke="#999" stroke-width="1.5"/></svg><svg style="position:absolute;left:1533px;top:289px;" width="16" height="10" viewBox="0 0 16 10"><path d="M0 0H16L8 10Z" fill="#222"/></svg><svg style="position:absolute;left:1562px;top:282px;" width="24" height="24" viewBox="0 0 24 24"><rect x="1" y="1" width="22" height="22" fill="#fff" stroke="#b455c6" stroke-width="2"/><rect x="4" y="8" width="16" height="13" fill="#b455c6"/><rect x="4" y="4" width="16" height="2" fill="#b455c6"/></svg><div style="position:absolute;left:1597.60px;top:282.77px;font-family:'Liberation Sans', sans-serif;font-size:22.6px;line-height:22.6px;font-weight:400;color:#222;white-space:pre;letter-spacing:-0.353px;">Devlog</div><svg style="position:absolute;left:1557px;top:329px;" width="16" height="10" viewBox="0 0 16 10"><path d="M0 0H16L8 10Z" fill="#222"/></svg><svg style="position:absolute;left:1584px;top:322px;" width="28" height="24" viewBox="0 0 28 24"><path d="M0 0 H8.5 L10.5 4.2 H28 V24 H0Z" fill="#4f84c4"/></svg><div style="position:absolute;left:1622.00px;top:322.77px;font-family:'Liberation Sans', sans-serif;font-size:22.6px;line-height:22.6px;font-weight:400;color:#222;white-space:pre;letter-spacing:-0.401px;">Assets</div><svg style="position:absolute;left:1608px;top:362px;" width="28" height="24" viewBox="0 0 28 24"><path d="M0 0 H8.5 L10.5 4.2 H28 V24 H0Z" fill="#4f84c4"/></svg><div style="position:absolute;left:1645.00px;top:362.77px;font-family:'Liberation Sans', sans-serif;font-size:22.6px;line-height:22.6px;font-weight:400;color:#222;white-space:pre;letter-spacing:-0.413px;">Scenes</div><svg style="position:absolute;left:1581px;top:409px;" width="16" height="10" viewBox="0 0 16 10"><path d="M0 0H16L8 10Z" fill="#222"/></svg><svg style="position:absolute;left:1608px;top:402px;" width="28" height="24" viewBox="0 0 28 24"><path d="M0 0 H8.5 L10.5 4.2 H28 V24 H0Z" fill="#4f84c4"/></svg><div style="position:absolute;left:1645.00px;top:402.77px;font-family:'Liberation Sans', sans-serif;font-size:22.6px;line-height:22.6px;font-weight:400;color:#222;white-space:pre;letter-spacing:0.005px;">Script</div><div style="position:absolute;left:1530px;top:434px;width:230px;height:40px;background:#a6a6a6;"></div><svg style="position:absolute;left:1634px;top:440px;" width="24" height="28" viewBox="0 0 24 28"><path d="M1 1 H17 L23 7 V27 H1Z" fill="none" stroke="#fff" stroke-width="2"/><text x="12" y="21" text-anchor="middle" font-family="Liberation Mono" font-size="14" fill="#fff">{}</text></svg><div style="position:absolute;left:1670px;top:434px;width:90px;height:40px;overflow:hidden;"><div style="position:absolute;left:0.00px;top:8.77px;font-family:'Liberation Sans', sans-serif;font-size:22.6px;line-height:22.6px;font-weight:400;color:#fff;white-space:pre;letter-spacing:-0.35px;">PlayerMove.cs</div></div><svg style="position:absolute;left:1608px;top:482px;" width="28" height="24" viewBox="0 0 28 24"><path d="M0 0 H8.5 L10.5 4.2 H28 V24 H0Z" fill="#4f84c4"/></svg><div style="position:absolute;left:1646.00px;top:482.77px;font-family:'Liberation Sans', sans-serif;font-size:22.6px;line-height:22.6px;font-weight:400;color:#222;white-space:pre;letter-spacing:-0.642px;">Tiles</div><div style="position:absolute;left:1762px;top:210px;width:1635px;height:57px;background:#bfbfbf;"></div><svg style="position:absolute;left:1784px;top:233px;" width="12" height="20" viewBox="0 0 12 20"><path d="M10 1.5 L2 10 L10 18.5" fill="none" stroke="#555" stroke-width="1.5"/></svg><svg style="position:absolute;left:1837px;top:233px;" width="12" height="20" viewBox="0 0 12 20"><path d="M2 1.5 L10 10 L2 18.5" fill="none" stroke="#555" stroke-width="1.5"/></svg><svg style="position:absolute;left:1848px;top:222px;" width="430" height="46" viewBox="0 0 430 46"><path d="M0 46 Q8 46 12 36 L20 12 Q24 1 36 1 H392 Q404 1 408 12 L416 36 Q420 46 430 46Z" fill="#fafafa"/></svg><div style="position:absolute;left:1884.00px;top:235.47px;font-family:'Liberation Sans', sans-serif;font-size:22.6px;line-height:22.6px;font-weight:700;color:#222;white-space:pre;letter-spacing:-0.336px;">PlayerMove.cs</div><svg style="position:absolute;left:2224px;top:238px;" width="18" height="18" viewBox="0 0 18 18"><circle cx="9" cy="9" r="6.5" fill="none" stroke="#888" stroke-width="2.5"/></svg><svg style="position:absolute;left:3357px;top:240px;" width="15" height="11" viewBox="0 0 15 11"><path d="M0 0H15L7.5 11Z" fill="#444"/></svg><div style="position:absolute;left:1762px;top:267px;width:1635px;height:49px;background:#fafafa;"></div><div style="position:absolute;left:1762px;top:316px;width:1635px;height:2px;background:#dcdcdc;"></div><svg style="position:absolute;left:1777px;top:281px;" width="26" height="26" viewBox="0 0 26 26"><path d="M13 0 L26 13 L13 26 L0 13Z" fill="#6b86dc"/><text x="13" y="19" text-anchor="middle" font-family="Liberation Mono" font-weight="700" font-size="15" fill="#fff">C</text></svg><div style="position:absolute;left:1813.90px;top:280.07px;font-family:'Liberation Sans', sans-serif;font-size:22.6px;line-height:22.6px;font-weight:400;color:#222;white-space:pre;letter-spacing:-0.403px;">PlayerMove</div><svg style="position:absolute;left:1952px;top:287px;" width="13" height="14" viewBox="0 0 13 14"><path d="M0 0 L13 7 L0 14Z" fill="#444"/></svg><svg style="position:absolute;left:1986px;top:280px;" width="28" height="28" viewBox="0 0 28 28"><rect x="1" y="1" width="26" height="26" rx="2" fill="none" stroke="#444" stroke-width="2"/><rect x="4" y="4" width="20" height="20" fill="#5b83dc"/><text x="14" y="20" text-anchor="middle" font-family="Liberation Sans" font-weight="700" font-size="14" fill="#fff">M</text></svg><div style="position:absolute;left:2024.00px;top:280.07px;font-family:'Liberation Sans', sans-serif;font-size:22.6px;line-height:22.6px;font-weight:400;color:#222;white-space:pre;letter-spacing:-0.386px;">FixedUpdate()</div><div style="position:absolute;left:3397px;top:210px;width:53px;height:1768px;background:#dedede;"></div><div style="position:absolute;left:3396px;top:210px;width:2px;height:1768px;background:#a9a9a9;"></div><svg style="position:absolute;left:3413px;top:231px;" width="22" height="25" viewBox="0 0 22 25"><path d="M0 3 H22 V7 H13 V25 H9 V7 H0Z" fill="#444"/><rect x="2" y="0" width="4" height="4" fill="#444"/></svg><div style="position:absolute;left:3437px;top:263px;transform-origin:0 0;transform:rotate(90deg);font-family:'Liberation Sans', sans-serif;font-size:22px;line-height:22px;color:#444;white-space:pre;">Toolbox</div><svg style="position:absolute;left:3413px;top:388px;" width="24" height="24" viewBox="0 0 24 24"><rect x="1" y="1" width="22" height="22" fill="none" stroke="#444" stroke-width="2"/><path d="M8 1V23M16 1V23" stroke="#444" stroke-width="1.5"/><rect x="3.5" y="5" width="2" height="2" fill="#444"/><rect x="3.5" y="11" width="2" height="2" fill="#444"/></svg><div style="position:absolute;left:3437px;top:421px;transform-origin:0 0;transform:rotate(90deg);font-family:'Liberation Sans', sans-serif;font-size:22px;line-height:22px;color:#444;white-space:pre;">Properties</div><svg style="position:absolute;left:3413px;top:566px;" width="24" height="25" viewBox="0 0 24 25"><rect x="1" y="1" width="22" height="23" fill="none" stroke="#444" stroke-width="2"/><path d="M5 7H19M9 12H19M13 17H19" stroke="#444" stroke-width="1.6"/></svg><div style="position:absolute;left:3437px;top:601px;transform-origin:0 0;transform:rotate(90deg);font-family:'Liberation Sans', sans-serif;font-size:22px;line-height:22px;color:#444;white-space:pre;">Document Outline</div><svg style="position:absolute;left:3415px;top:821px;" width="20" height="23" viewBox="0 0 20 23"><path d="M12 0 L3 13 H9 L7 23 L17 9 H11Z" fill="#444"/></svg><div style="position:absolute;left:3437px;top:853px;transform-origin:0 0;transform:rotate(90deg);font-family:'Liberation Sans', sans-serif;font-size:22px;line-height:22px;color:#444;white-space:pre;">Tests</div><div style="position:absolute;left:1762px;top:318px;width:34px;height:1650px;background:#f4f4f4;"></div><div style="position:absolute;left:3100px;top:318px;width:2px;height:1650px;background:#efefef;"></div><svg style="position:absolute;left:3372px;top:322px;" width="20" height="20" viewBox="0 0 20 20"><path d="M10 0 L20 10 L10 20 L0 10Z" fill="#4a80c8"/></svg><div style="position:absolute;left:3382px;top:1745px;width:14px;height:2.5px;background:#111;"></div><div style="position:absolute;left:1953.5px;top:503px;width:1.5px;height:475px;background:repeating-linear-gradient(180deg,#d9d9d9 0 6px,transparent 6px 10px);"></div><div style="position:absolute;left:2039.5px;top:681px;width:1.5px;height:87px;background:repeating-linear-gradient(180deg,#d9d9d9 0 6px,transparent 6px 10px);"></div><div style="position:absolute;left:2011.5px;top:862px;width:1.5px;height:79px;background:repeating-linear-gradient(180deg,#d9d9d9 0 6px,transparent 6px 10px);"></div><div style="position:absolute;left:1852.07px;top:323.42px;font-family:'Liberation Mono', monospace;font-size:24.046393041043842px;line-height:24.046393041043842px;font-weight:400;color:#3a85a2;white-space:pre;transform:scaleY(1.09);transform-origin:0 18.43px;">1</div><div style="position:absolute;left:1948.50px;top:323.42px;font-family:'Liberation Mono', monospace;font-size:24.046393041043842px;line-height:24.046393041043842px;font-weight:400;color:#1a1a1a;white-space:pre;transform:scaleY(1.09);transform-origin:0 18.43px;"><span style="color:#6c6cf5">using</span><span style="color:#7b7b7b"> System.Collections;</span></div><div style="position:absolute;left:1852.07px;top:353.42px;font-family:'Liberation Mono', monospace;font-size:24.046393041043842px;line-height:24.046393041043842px;font-weight:400;color:#3a85a2;white-space:pre;transform:scaleY(1.09);transform-origin:0 18.43px;">2</div><div style="position:absolute;left:1948.50px;top:353.42px;font-family:'Liberation Mono', monospace;font-size:24.046393041043842px;line-height:24.046393041043842px;font-weight:400;color:#1a1a1a;white-space:pre;transform:scaleY(1.09);transform-origin:0 18.43px;"><span style="color:#6c6cf5">using</span><span style="color:#7b7b7b"> System.Collections.Generic;</span></div><div style="position:absolute;left:1852.07px;top:383.42px;font-family:'Liberation Mono', monospace;font-size:24.046393041043842px;line-height:24.046393041043842px;font-weight:400;color:#3a85a2;white-space:pre;transform:scaleY(1.09);transform-origin:0 18.43px;">3</div><div style="position:absolute;left:1948.50px;top:383.42px;font-family:'Liberation Mono', monospace;font-size:24.046393041043842px;line-height:24.046393041043842px;font-weight:400;color:#1a1a1a;white-space:pre;transform:scaleY(1.09);transform-origin:0 18.43px;"><span style="color:#0000ff">using</span><span style="color:#1a1a1a"> UnityEngine;</span></div><div style="position:absolute;left:1852.07px;top:413.42px;font-family:'Liberation Mono', monospace;font-size:24.046393041043842px;line-height:24.046393041043842px;font-weight:400;color:#3a85a2;white-space:pre;transform:scaleY(1.09);transform-origin:0 18.43px;">4</div><div style="position:absolute;left:1852.07px;top:443.42px;font-family:'Liberation Mono', monospace;font-size:24.046393041043842px;line-height:24.046393041043842px;font-weight:400;color:#3a85a2;white-space:pre;transform:scaleY(1.09);transform-origin:0 18.43px;">5</div><div style="position:absolute;left:1948.50px;top:443.42px;font-family:'Liberation Mono', monospace;font-size:24.046393041043842px;line-height:24.046393041043842px;font-weight:400;color:#1a1a1a;white-space:pre;transform:scaleY(1.09);transform-origin:0 18.43px;"><span style="color:#0000ff">public class</span><span style="color:#1a1a1a"> </span><span style="color:#5588ad">PlayerMove</span><span style="color:#1a1a1a"> : </span><span style="color:#5588ad">MonoBehaviour</span></div><div style="position:absolute;left:1852.07px;top:473.42px;font-family:'Liberation Mono', monospace;font-size:24.046393041043842px;line-height:24.046393041043842px;font-weight:400;color:#3a85a2;white-space:pre;transform:scaleY(1.09);transform-origin:0 18.43px;">6</div><div style="position:absolute;left:1948.50px;top:473.42px;font-family:'Liberation Mono', monospace;font-size:24.046393041043842px;line-height:24.046393041043842px;font-weight:400;color:#1a1a1a;white-space:pre;transform:scaleY(1.09);transform-origin:0 18.43px;"><span style="color:#1a1a1a">{</span></div><div style="position:absolute;left:1852.07px;top:503.42px;font-family:'Liberation Mono', monospace;font-size:24.046393041043842px;line-height:24.046393041043842px;font-weight:400;color:#3a85a2;white-space:pre;transform:scaleY(1.09);transform-origin:0 18.43px;">7</div><div style="position:absolute;left:1948.50px;top:503.42px;font-family:'Liberation Mono', monospace;font-size:24.046393041043842px;line-height:24.046393041043842px;font-weight:400;color:#1a1a1a;white-space:pre;transform:scaleY(1.09);transform-origin:0 18.43px;"><span style="color:#1a1a1a">    </span><span style="color:#5588ad">Rigidbody2D</span><span style="color:#1a1a1a"> rigid;</span></div><div style="position:absolute;left:1852.07px;top:533.42px;font-family:'Liberation Mono', monospace;font-size:24.046393041043842px;line-height:24.046393041043842px;font-weight:400;color:#3a85a2;white-space:pre;transform:scaleY(1.09);transform-origin:0 18.43px;">8</div><div style="position:absolute;left:1852.07px;top:563.42px;font-family:'Liberation Mono', monospace;font-size:24.046393041043842px;line-height:24.046393041043842px;font-weight:400;color:#3a85a2;white-space:pre;transform:scaleY(1.09);transform-origin:0 18.43px;">9</div><div style="position:absolute;left:1948.50px;top:563.42px;font-family:'Liberation Mono', monospace;font-size:24.046393041043842px;line-height:24.046393041043842px;font-weight:400;color:#1a1a1a;white-space:pre;transform:scaleY(1.09);transform-origin:0 18.43px;"><span style="color:#1a1a1a">    </span><span style="color:#0000ff">float</span><span style="color:#1a1a1a"> h;</span></div><div style="position:absolute;left:1837.64px;top:593.42px;font-family:'Liberation Mono', monospace;font-size:24.046393041043842px;line-height:24.046393041043842px;font-weight:400;color:#3a85a2;white-space:pre;transform:scaleY(1.09);transform-origin:0 18.43px;">10</div><div style="position:absolute;left:1837.64px;top:623.42px;font-family:'Liberation Mono', monospace;font-size:24.046393041043842px;line-height:24.046393041043842px;font-weight:400;color:#3a85a2;white-space:pre;transform:scaleY(1.09);transform-origin:0 18.43px;">11</div><div style="position:absolute;left:1837.64px;top:653.42px;font-family:'Liberation Mono', monospace;font-size:24.046393041043842px;line-height:24.046393041043842px;font-weight:400;color:#3a85a2;white-space:pre;transform:scaleY(1.09);transform-origin:0 18.43px;">12</div><div style="position:absolute;left:1948.50px;top:653.42px;font-family:'Liberation Mono', monospace;font-size:24.046393041043842px;line-height:24.046393041043842px;font-weight:400;color:#1a1a1a;white-space:pre;transform:scaleY(1.09);transform-origin:0 18.43px;"><span style="color:#1a1a1a">      </span><span style="color:#0000ff">private void</span><span style="color:#1a1a1a"> </span><span style="color:#74531f">Awake</span><span style="color:#1a1a1a">()</span></div><div style="position:absolute;left:1837.64px;top:683.42px;font-family:'Liberation Mono', monospace;font-size:24.046393041043842px;line-height:24.046393041043842px;font-weight:400;color:#3a85a2;white-space:pre;transform:scaleY(1.09);transform-origin:0 18.43px;">13</div><div style="position:absolute;left:1948.50px;top:683.42px;font-family:'Liberation Mono', monospace;font-size:24.046393041043842px;line-height:24.046393041043842px;font-weight:400;color:#1a1a1a;white-space:pre;transform:scaleY(1.09);transform-origin:0 18.43px;"><span style="color:#1a1a1a">    {</span></div><div style="position:absolute;left:1837.64px;top:713.42px;font-family:'Liberation Mono', monospace;font-size:24.046393041043842px;line-height:24.046393041043842px;font-weight:400;color:#3a85a2;white-space:pre;transform:scaleY(1.09);transform-origin:0 18.43px;">14</div><div style="position:absolute;left:1948.50px;top:713.42px;font-family:'Liberation Mono', monospace;font-size:24.046393041043842px;line-height:24.046393041043842px;font-weight:400;color:#1a1a1a;white-space:pre;transform:scaleY(1.09);transform-origin:0 18.43px;"><span style="color:#1a1a1a">        rigid = </span><span style="color:#74531f">GetComponent</span><span style="color:#1a1a1a">&lt;</span><span style="color:#5588ad">Rigidbody2D</span><span style="color:#1a1a1a">&gt;();</span></div><div style="position:absolute;left:1837.64px;top:743.42px;font-family:'Liberation Mono', monospace;font-size:24.046393041043842px;line-height:24.046393041043842px;font-weight:400;color:#3a85a2;white-space:pre;transform:scaleY(1.09);transform-origin:0 18.43px;">15</div><div style="position:absolute;left:1948.50px;top:743.42px;font-family:'Liberation Mono', monospace;font-size:24.046393041043842px;line-height:24.046393041043842px;font-weight:400;color:#1a1a1a;white-space:pre;transform:scaleY(1.09);transform-origin:0 18.43px;"><span style="color:#1a1a1a">    }</span></div><div style="position:absolute;left:1837.64px;top:773.42px;font-family:'Liberation Mono', monospace;font-size:24.046393041043842px;line-height:24.046393041043842px;font-weight:400;color:#3a85a2;white-space:pre;transform:scaleY(1.09);transform-origin:0 18.43px;">16</div><div style="position:absolute;left:1837.64px;top:803.42px;font-family:'Liberation Mono', monospace;font-size:24.046393041043842px;line-height:24.046393041043842px;font-weight:400;color:#3a85a2;white-space:pre;transform:scaleY(1.09);transform-origin:0 18.43px;">17</div><div style="position:absolute;left:1948.50px;top:803.42px;font-family:'Liberation Mono', monospace;font-size:24.046393041043842px;line-height:24.046393041043842px;font-weight:400;color:#1a1a1a;white-space:pre;transform:scaleY(1.09);transform-origin:0 18.43px;"><span style="color:#1a1a1a">    </span><span style="color:#0000ff">private void</span><span style="color:#1a1a1a"> </span><span style="color:#74531f">FixedUpdate</span><span style="color:#1a1a1a">()</span></div><div style="position:absolute;left:1837.64px;top:833.42px;font-family:'Liberation Mono', monospace;font-size:24.046393041043842px;line-height:24.046393041043842px;font-weight:400;color:#3a85a2;white-space:pre;transform:scaleY(1.09);transform-origin:0 18.43px;">18</div><div style="position:absolute;left:1948.50px;top:833.42px;font-family:'Liberation Mono', monospace;font-size:24.046393041043842px;line-height:24.046393041043842px;font-weight:400;color:#1a1a1a;white-space:pre;transform:scaleY(1.09);transform-origin:0 18.43px;"><span style="color:#1a1a1a">    {</span></div><div style="position:absolute;left:1837.64px;top:863.42px;font-family:'Liberation Mono', monospace;font-size:24.046393041043842px;line-height:24.046393041043842px;font-weight:400;color:#3a85a2;white-space:pre;transform:scaleY(1.09);transform-origin:0 18.43px;">19</div><div style="position:absolute;left:1948.50px;top:863.42px;font-family:'Liberation Mono', monospace;font-size:24.046393041043842px;line-height:24.046393041043842px;font-weight:400;color:#1a1a1a;white-space:pre;transform:scaleY(1.09);transform-origin:0 18.43px;"><span style="color:#1a1a1a">        h = </span><span style="color:#5588ad">Input</span><span style="color:#1a1a1a">.</span><span style="color:#74531f">GetAxisRaw</span><span style="color:#1a1a1a">(</span><span style="color:#a31515">&quot;Horizontal&quot;</span><span style="color:#1a1a1a">);</span></div><div style="position:absolute;left:1837.64px;top:893.42px;font-family:'Liberation Mono', monospace;font-size:24.046393041043842px;line-height:24.046393041043842px;font-weight:400;color:#3a85a2;white-space:pre;transform:scaleY(1.09);transform-origin:0 18.43px;">20</div><div style="position:absolute;left:1837.64px;top:923.42px;font-family:'Liberation Mono', monospace;font-size:24.046393041043842px;line-height:24.046393041043842px;font-weight:400;color:#3a85a2;white-space:pre;transform:scaleY(1.09);transform-origin:0 18.43px;">21</div><div style="position:absolute;left:1948.50px;top:923.42px;font-family:'Liberation Mono', monospace;font-size:24.046393041043842px;line-height:24.046393041043842px;font-weight:400;color:#1a1a1a;white-space:pre;transform:scaleY(1.09);transform-origin:0 18.43px;"><span style="color:#1a1a1a">        rigid.</span><span style="color:#74531f">AddForce</span><span style="color:#1a1a1a">(</span><span style="color:#5588ad">Vector2</span><span style="color:#1a1a1a">.right </span><span style="color:#74531f">∗</span><span style="color:#1a1a1a"> h, </span><span style="color:#5588ad">ForceMode2D</span><span style="color:#1a1a1a">.</span><span style="color:#1f377f">Impulse</span><span style="color:#1a1a1a">);</span></div><div style="position:absolute;left:1837.64px;top:953.42px;font-family:'Liberation Mono', monospace;font-size:24.046393041043842px;line-height:24.046393041043842px;font-weight:400;color:#3a85a2;white-space:pre;transform:scaleY(1.09);transform-origin:0 18.43px;">22</div><div style="position:absolute;left:1948.50px;top:953.42px;font-family:'Liberation Mono', monospace;font-size:24.046393041043842px;line-height:24.046393041043842px;font-weight:400;color:#1a1a1a;white-space:pre;transform:scaleY(1.09);transform-origin:0 18.43px;"><span style="color:#1a1a1a">    }</span></div><div style="position:absolute;left:1837.64px;top:983.42px;font-family:'Liberation Mono', monospace;font-size:24.046393041043842px;line-height:24.046393041043842px;font-weight:400;color:#3a85a2;white-space:pre;transform:scaleY(1.09);transform-origin:0 18.43px;">23</div><div style="position:absolute;left:1948.50px;top:983.42px;font-family:'Liberation Mono', monospace;font-size:24.046393041043842px;line-height:24.046393041043842px;font-weight:400;color:#1a1a1a;white-space:pre;transform:scaleY(1.09);transform-origin:0 18.43px;"><span style="color:#1a1a1a">}</span></div><div style="position:absolute;left:1837.64px;top:1013.42px;font-family:'Liberation Mono', monospace;font-size:24.046393041043842px;line-height:24.046393041043842px;font-weight:400;color:#3a85a2;white-space:pre;transform:scaleY(1.09);transform-origin:0 18.43px;">24</div></body></html>
